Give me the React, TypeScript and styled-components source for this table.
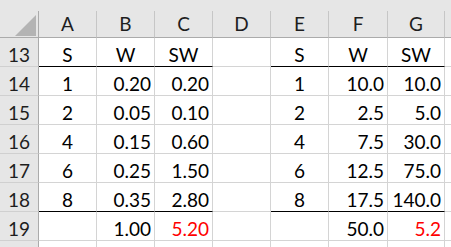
import React from 'react';
import styled, { createGlobalStyle } from 'styled-components';

const GlobalStyle = createGlobalStyle`
  html, body {
    margin: 0;
    padding: 0;
    background: #ffffff;
    overflow: hidden;
  }
  body {
    font-family: Lato, "Liberation Sans", sans-serif;
  }
`;

type Align = 'center' | 'right';

interface CellData {
  text: string;
  red?: boolean;
}

const columns = ['A', 'B', 'C', 'D', 'E', 'F', 'G', ''];
const aligns: Align[] = ['center', 'right', 'right', 'center', 'center', 'right', 'right', 'center'];
// columns that get the black rule under the title row and above the totals
const ruled = [true, true, true, false, true, true, true, false];

const c = (text: string, red = false): CellData => ({ text, red });

// row 20 only peeks in at the bottom edge, so its number stays blank
const rows: { n: number | ''; title?: boolean; rule?: boolean; cells: CellData[] }[] = [
  { n: 13, title: true, rule: true, cells: [c('S'), c('W'), c('SW'), c(''), c('S'), c('W'), c('SW'), c('')] },
  { n: 14, cells: [c('1'), c('0.20'), c('0.20'), c(''), c('1'), c('10.0'), c('10.0'), c('')] },
  { n: 15, cells: [c('2'), c('0.05'), c('0.10'), c(''), c('2'), c('2.5'), c('5.0'), c('')] },
  { n: 16, cells: [c('4'), c('0.15'), c('0.60'), c(''), c('4'), c('7.5'), c('30.0'), c('')] },
  { n: 17, cells: [c('6'), c('0.25'), c('1.50'), c(''), c('6'), c('12.5'), c('75.0'), c('')] },
  { n: 18, rule: true, cells: [c('8'), c('0.35'), c('2.80'), c(''), c('8'), c('17.5'), c('140.0'), c('')] },
  { n: 19, cells: [c(''), c('1.00'), c('5.20', true), c(''), c(''), c('50.0'), c('5.2', true), c('')] },
  { n: '', cells: [c(''), c(''), c(''), c(''), c(''), c(''), c(''), c('')] },
];

const App: React.FC = () => {
  return (
    <>
      <GlobalStyle />
      <S.Window>
        <S.TopBand />
        <S.Sheet>
          <S.Corner>
            <S.CornerMark viewBox="0 0 21 21" width={21} height={21}>
              <polygon points="21,0 21,21 0,21" fill="#b4b4b4" />
            </S.CornerMark>
          </S.Corner>
          {columns.map((col, i) => (
            <S.ColHeader key={`h${i}`}>{col}</S.ColHeader>
          ))}
          {rows.map((row, r) => (
            <React.Fragment key={r}>
              <S.RowHeader>{row.n}</S.RowHeader>
              {row.cells.map((cell, i) => (
                <S.Cell
                  key={i}
                  $align={row.title ? 'center' : aligns[i]}
                  $red={cell.red}
                  $rule={!!row.rule && ruled[i]}
                >
                  {cell.text}
                </S.Cell>
              ))}
            </React.Fragment>
          ))}
        </S.Sheet>
      </S.Window>
    </>
  );
};

export default App;

const S = {
  Window: styled.div`
    width: 451px;
    height: 247px;
    overflow: hidden;
    background: #ffffff;
  `,
  TopBand: styled.div`
    height: 11px;
    background: #e6e6e6;
  `,
  Sheet: styled.div`
    display: grid;
    grid-template-columns: 39px 58px 58px 58px 58px 58px 59px 57px 1fr;
    grid-template-rows: 27px repeat(8, 29px);
    font-size: 19px;
    color: #000000;
  `,
  Corner: styled.div`
    box-sizing: border-box;
    background: #e6e6e6;
    border-right: 1px solid #ababab;
    border-bottom: 1px solid #ababab;
    display: flex;
    justify-content: flex-end;
    align-items: flex-end;
    padding: 0 2px 1px 0;
  `,
  CornerMark: styled.svg`
    display: block;
  `,
  ColHeader: styled.div`
    box-sizing: border-box;
    background: #e6e6e6;
    border-right: 1px solid #c6c6c6;
    border-bottom: 1px solid #ababab;
    display: flex;
    justify-content: center;
    align-items: flex-end;
    line-height: 1;
    padding-bottom: 4px;
    color: #1e1e1e;
  `,
  RowHeader: styled.div`
    box-sizing: border-box;
    background: #e6e6e6;
    border-right: 1px solid #ababab;
    border-bottom: 1px solid #d0d0d0;
    display: flex;
    justify-content: center;
    align-items: flex-end;
    line-height: 1;
    padding-bottom: 2px;
    color: #1e1e1e;
  `,
  Cell: styled.div<{ $align: Align; $red?: boolean; $rule?: boolean }>`
    box-sizing: border-box;
    border-right: 1px solid #d4d4d4;
    border-bottom: 1px solid ${(p) => (p.$rule ? '#000000' : '#d4d4d4')};
    display: flex;
    justify-content: ${(p) => (p.$align === 'right' ? 'flex-end' : 'center')};
    align-items: flex-end;
    line-height: 1;
    padding: 0 3px 2px 3px;
    white-space: nowrap;
    color: ${(p) => (p.$red ? '#ff0000' : '#000000')};
  `,
};
